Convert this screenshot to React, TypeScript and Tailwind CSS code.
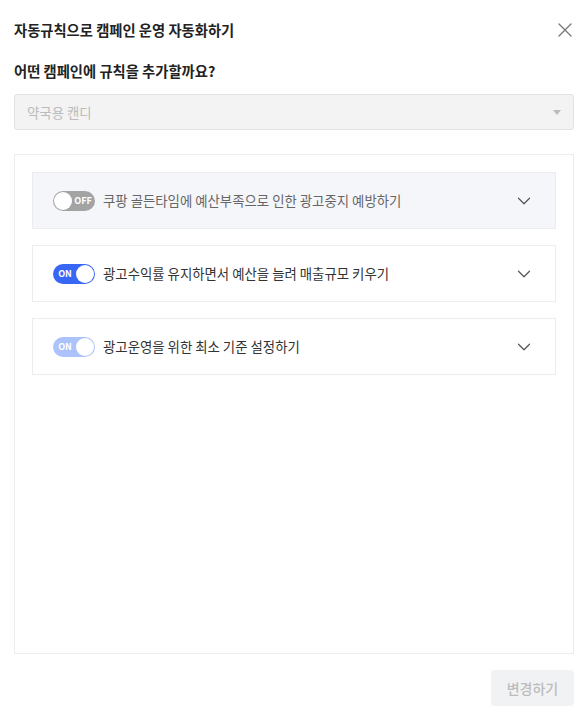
import { ChevronDown, X } from "lucide-react";

function Toggle({ on, faded }: { on: boolean; faded?: boolean }) {
	const bg = on ? (faded ? "bg-[#abc2fb]" : "bg-[#3867f5]") : "bg-[#a3a3a3]";
	return (
		<div className={`flex items-center w-[42px] h-[20px] rounded-full px-[1px] ${bg} ${on ? "flex-row" : "flex-row-reverse"}`}>
			<span className="flex-1 text-center text-[9px] font-bold leading-none text-white">{on ? "ON" : "OFF"}</span>
			<span className="w-[18px] h-[18px] rounded-full bg-white shrink-0" />
		</div>
	);
}

function RuleItem({ text, on, faded, active }: { text: string; on: boolean; faded?: boolean; active?: boolean }) {
	return (
		<div className={`flex items-center h-[57px] pl-[20px] pr-[20px] border border-[#ececec] ${active ? "bg-[#f5f6fa]" : "bg-white"}`}>
			<Toggle on={on} faded={faded} />
			<span className={`ml-[8px] text-[13.4px] ${active ? "text-[#666]" : "text-[#333]"}`}>{text}</span>
			<ChevronDown className="ml-auto text-[#555]" size={22} strokeWidth={1.3} />
		</div>
	);
}

export default function App() {
	return (
		<div className="flex flex-col w-[586px] h-[715px] pl-[14px] pr-[12px] bg-white font-['Noto_Sans_CJK_KR','Noto_Sans',sans-serif]">
			<div className="flex items-center justify-between h-[60px]">
				<h1 className="text-[14.3px] font-bold text-[#222]">자동규칙으로 캠페인 운영 자동화하기</h1>
				<X className="text-[#777] -mr-[3px]" size={24} strokeWidth={1.3} />
			</div>
			<h2 className="text-[14.3px] font-bold text-[#222] leading-[22px]">어떤 캠페인에 규칙을 추가할까요?</h2>
			<div className="flex items-center h-[36px] mt-[12px] px-[12px] bg-[#f3f3f3] border border-[#e2e2e2] rounded-[3px]">
				<span className="text-[13.4px] text-[#bbb]">약국용 캔디</span>
				<span className="ml-auto w-0 h-0 border-l-[4px] border-r-[4px] border-t-[5px] border-l-transparent border-r-transparent border-t-[#bbb]" />
			</div>
			<div className="flex flex-col gap-[16px] h-[500px] mt-[24px] px-[17px] pt-[17px] border border-[#ececec]">
				<RuleItem text="쿠팡 골든타임에 예산부족으로 인한 광고중지 예방하기" on={false} active />
				<RuleItem text="광고수익률 유지하면서 예산을 늘려 매출규모 키우기" on />
				<RuleItem text="광고운영을 위한 최소 기준 설정하기" on faded />
			</div>
			<div className="flex justify-end mt-[16px]">
				<button className="w-[83px] h-[36px] rounded-[4px] bg-[#f1f2f4] text-[14px] font-medium text-[#bdbdbd]">변경하기</button>
			</div>
		</div>
	);
}
